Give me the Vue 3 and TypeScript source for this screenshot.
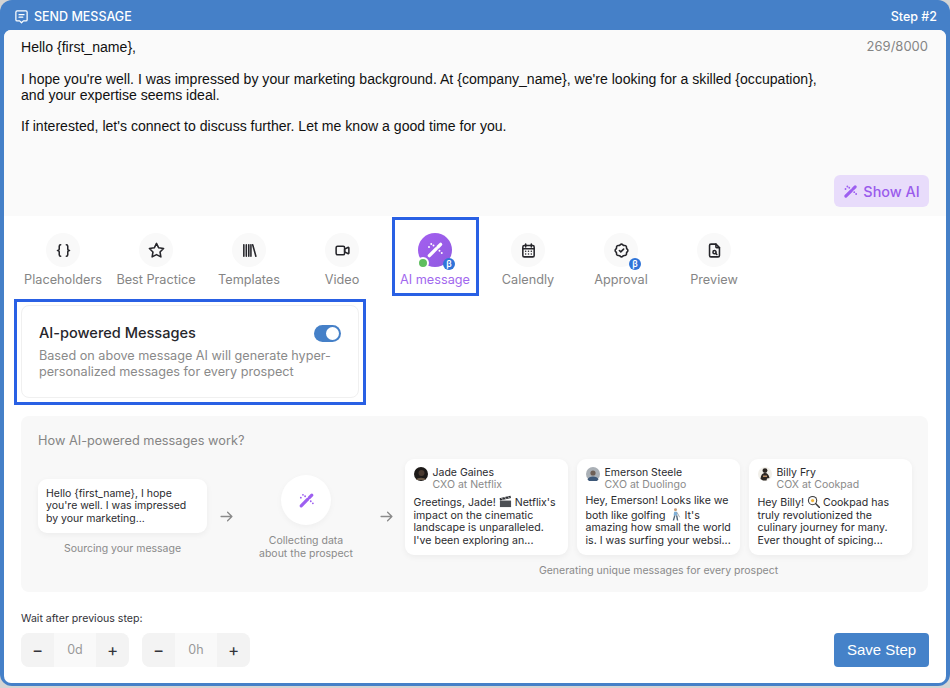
<script setup lang="ts">
interface Tab {
  label: string
  paths: string[]
  beta?: boolean
}

const wand = [
  'M4.5 19.5L13.5 10.5',
  'M16 8L19.5 4.5',
]

const tabs: Tab[] = [
  {
    label: 'Placeholders',
    paths: [
      'M8 4a2 2 0 0 0 -2 2v3.5a2.5 2.5 0 0 1 -2.5 2.5a2.5 2.5 0 0 1 2.5 2.5v3.5a2 2 0 0 0 2 2',
      'M16 4a2 2 0 0 1 2 2v3.5a2.5 2.5 0 0 0 2.5 2.5a2.5 2.5 0 0 0 -2.5 2.5v3.5a2 2 0 0 1 -2 2',
    ],
  },
  {
    label: 'Best Practice',
    paths: ['M12 17.75l-6.172 3.245l1.179 -6.873l-5 -4.867l6.9 -1l3.086 -6.253l3.086 6.253l6.9 1l-5 4.867l1.179 6.873z'],
  },
  {
    label: 'Templates',
    paths: ['M4 4v16', 'M7.5 4v16', 'M11 4v16', 'M14 4v16', 'M16.5 4l4.5 16'],
  },
  {
    label: 'Video',
    paths: [
      'M15 10l4.553 -2.276a1 1 0 0 1 1.447 .894v6.764a1 1 0 0 1 -1.447 .894l-4.553 -2.276v-4z',
      'M3 8a2 2 0 0 1 2 -2h8a2 2 0 0 1 2 2v8a2 2 0 0 1 -2 2h-8a2 2 0 0 1 -2 -2z',
    ],
  },
  { label: 'AI message', paths: [], beta: true },
  {
    label: 'Calendly',
    paths: [
      'M4 7a2 2 0 0 1 2 -2h12a2 2 0 0 1 2 2v12a2 2 0 0 1 -2 2h-12a2 2 0 0 1 -2 -2z',
      'M8 3v4', 'M16 3v4', 'M4 9.5h16',
      'M8 13h.01', 'M12 13h.01', 'M16 13h.01', 'M8 17h.01', 'M12 17h.01', 'M16 17h.01',
    ],
  },
  {
    label: 'Approval',
    beta: true,
    paths: [
      'M5 7.2a2.2 2.2 0 0 1 2.2 -2.2h1a2.2 2.2 0 0 0 1.55 -.64l.7 -.7a2.2 2.2 0 0 1 3.12 0l.7 .7c.412 .41 .97 .64 1.55 .64h1a2.2 2.2 0 0 1 2.2 2.2v1c0 .58 .23 1.138 .64 1.55l.7 .7a2.2 2.2 0 0 1 0 3.12l-.7 .7a2.2 2.2 0 0 0 -.64 1.55v1a2.2 2.2 0 0 1 -2.2 2.2h-1a2.2 2.2 0 0 0 -1.55 .64l-.7 .7a2.2 2.2 0 0 1 -3.12 0l-.7 -.7a2.2 2.2 0 0 0 -1.55 -.64h-1a2.2 2.2 0 0 1 -2.2 -2.2v-1a2.2 2.2 0 0 0 -.64 -1.55l-.7 -.7a2.2 2.2 0 0 1 0 -3.12l.7 -.7a2.2 2.2 0 0 0 .64 -1.55v-1',
      'M9 12l2 2l4 -4',
    ],
  },
  {
    label: 'Preview',
    paths: [
      'M14 3v4a1 1 0 0 0 1 1h4',
      'M17 21h-10a2 2 0 0 1 -2 -2v-14a2 2 0 0 1 2 -2h7l5 5v11a2 2 0 0 1 -2 2z',
      'M12 16.5a2.2 2.2 0 1 0 0 -4.4a2.2 2.2 0 0 0 0 4.4z',
      'M13.7 16l1.6 1.6',
    ],
  },
]

const prospects = [
  { name: 'Jade Gaines', role: 'CXO at Netflix', kind: 'jade', before: 'Greetings, Jade! ', emoji: 'clapper', after: " Netflix's impact on the cinematic landscape is unparalleled. I've been exploring an..." },
  { name: 'Emerson Steele', role: 'CXO at Duolingo', kind: 'emerson', before: 'Hey, Emerson! Looks like we both like golfing ', emoji: 'golfer', after: " It's amazing how small the world is. I was surfing your websi..." },
  { name: 'Billy Fry', role: 'COX at Cookpad', kind: 'billy', before: 'Hey Billy! ', emoji: 'pan', after: ' Cookpad has truly revolutionized the culinary journey for many. Ever thought of spicing...' },
]

const steppers = ['0d', '0h']
</script>

<template>
  <div class="frame">
    <header class="top">
      <div class="top-left">
        <svg class="msg" viewBox="0 0 24 24" fill="none" stroke="#fff" stroke-width="2" stroke-linecap="round" stroke-linejoin="round">
          <path d="M5 3h14a2 2 0 0 1 2 2v12a2 2 0 0 1 -2 2h-4l-3 3l-3 -3h-4a2 2 0 0 1 -2 -2v-12a2 2 0 0 1 2 -2z" />
          <path d="M8 9h8" />
          <path d="M8 13h6" />
        </svg>
        <span>SEND MESSAGE</span>
      </div>
      <span class="step">Step #2</span>
    </header>

    <div class="panel">
      <section class="editor">
        <div class="counter">269/8000</div>
        <p>Hello {first_name},</p>
        <p>I hope you're well. I was impressed by your marketing background. At {company_name}, we're looking for a skilled {occupation},<br />and your expertise seems ideal.</p>
        <p>If interested, let's connect to discuss further. Let me know a good time for you.</p>
        <button class="show-ai">
          <svg viewBox="0 0 24 24" fill="none" stroke="#9d5ff0" stroke-linecap="round">
            <path v-for="d in wand" :key="d" :d="d" stroke-width="5" />
            <path d="M7 4h.01M4 8h.01M18 13h.01M21 16h.01M10 6h.01" stroke-width="3" />
          </svg>
          Show AI
        </button>
      </section>

      <nav class="tabs">
        <div v-for="tab in tabs" :key="tab.label" class="tab" :class="{ active: tab.label === 'AI message' }">
          <div class="tab-icon">
            <svg v-if="tab.label === 'AI message'" class="tab-svg wand" viewBox="0 0 24 24" fill="none" stroke="#fff" stroke-linecap="round">
              <path v-for="d in wand" :key="d" :d="d" stroke-width="4.5" />
              <path d="M7 4h.01M4 8h.01M18 13h.01M21 16h.01M10 6h.01" stroke-width="2.6" />
            </svg>
            <svg v-else class="tab-svg" viewBox="0 0 24 24" fill="none" stroke="#26262b" stroke-width="2.2" stroke-linecap="round" stroke-linejoin="round">
              <path v-for="d in tab.paths" :key="d" :d="d" />
            </svg>
            <span v-if="tab.label === 'AI message'" class="dot"></span>
            <span v-if="tab.beta" class="beta">β</span>
          </div>
          <span class="tab-label">{{ tab.label }}</span>
        </div>
        <div class="mark mark-tab"></div>
      </nav>

      <div class="ai-row">
        <div class="ai-card">
          <div class="ai-head">
            <h3>AI-powered Messages</h3>
            <span class="toggle"><i></i></span>
          </div>
          <p>Based on above message AI will generate hyper-personalized messages for every prospect</p>
        </div>
        <div class="mark mark-card"></div>
      </div>

      <section class="how">
        <h4>How AI-powered messages work?</h4>
        <div class="flow">
          <div class="source">
            <div class="bubble">Hello {first_name}, I hope you're well. I was impressed by your marketing...</div>
            <div class="caption">Sourcing your message</div>
          </div>
          <svg class="arrow" viewBox="0 0 24 24" fill="none" stroke="#8a8a8a" stroke-width="2.4" stroke-linecap="round" stroke-linejoin="round">
            <path d="M2 12h20M14 4l8 8l-8 8" />
          </svg>
          <div class="collect">
            <div class="collect-circle">
              <svg viewBox="0 0 24 24" fill="none" stroke="#9d5ff0" stroke-linecap="round">
                <path v-for="d in wand" :key="d" :d="d" stroke-width="4.5" />
                <path d="M7 4h.01M4 8h.01M18 13h.01M21 16h.01M10 6h.01" stroke-width="2.6" />
              </svg>
            </div>
            <div class="caption">Collecting data<br />about the prospect</div>
          </div>
          <svg class="arrow" viewBox="0 0 24 24" fill="none" stroke="#8a8a8a" stroke-width="2.4" stroke-linecap="round" stroke-linejoin="round">
            <path d="M2 12h20M14 4l8 8l-8 8" />
          </svg>
          <div class="generated">
            <div class="cards">
              <article v-for="p in prospects" :key="p.name" class="card">
                <div class="person">
                  <svg class="avatar" viewBox="0 0 14 14">
                    <template v-if="p.kind === 'jade'">
                      <circle cx="7" cy="7" r="7" fill="#1d1a18" />
                      <circle cx="7.500" cy="6" r="3" fill="#4a3a30" />
                      <path d="M2 13c1-3 9-3 10 0z" fill="#6b5a48" />
                    </template>
                    <template v-else-if="p.kind === 'emerson'">
                      <circle cx="7" cy="7" r="7" fill="#aab0b6" />
                      <circle cx="7" cy="6" r="2.600" fill="#6e5f55" />
                      <path d="M1.500 12.500c1-4 10-4 11 0a7 7 0 0 1 -11 0z" fill="#3d5878" />
                    </template>
                    <template v-else>
                      <circle cx="7" cy="7" r="7" fill="#f1efe9" />
                      <circle cx="7" cy="3.600" r="2.400" fill="#2b2622" />
                      <path d="M2.500 12c.5-4 2-6 4.500-6s4 2 4.500 5l-2.500 .5l-.5 2h-3.500z" fill="#2b2622" />
                      <path d="M5 8.500h4v1.500h-4z" fill="#b98f68" />
                    </template>
                  </svg>
                  <div>
                    <div class="name">{{ p.name }}</div>
                    <div class="role">{{ p.role }}</div>
                  </div>
                </div>
                <p>{{ p.before }}<svg v-if="p.emoji === 'clapper'" class="emoji" viewBox="0 0 14 14">
                    <path d="M1 6h12v7h-12z" fill="#4c4f54" />
                    <path d="M.6 3.400l11.800-2.700l.5 2.600l-11.800 2.700z" fill="#2e3034" />
                    <path d="M2.500 3l1.700 2M6 2.200l1.700 2M9.500 1.400l1.700 2" stroke="#d8d8d8" stroke-width="1" />
                  </svg><svg v-else-if="p.emoji === 'golfer'" class="emoji" viewBox="0 0 14 14">
                    <circle cx="7" cy="2" r="1.600" fill="#c99a72" />
                    <path d="M5.500 4h3l.5 4h-4z" fill="#7fb0d8" />
                    <path d="M5.500 8h1.500l-1.500 5.500h-1.500zM7.500 8h1.500l1 5.500h-1.500z" fill="#4f6478" />
                    <path d="M8.500 4.500l3 5.500" stroke="#8a8f94" stroke-width=".8" />
                  </svg><svg v-else class="emoji" viewBox="0 0 14 14">
                    <circle cx="6" cy="6" r="5" fill="#3a3a3c" />
                    <circle cx="6" cy="6" r="3.900" fill="#fafafa" />
                    <circle cx="6" cy="6" r="1.700" fill="#f3b63a" />
                    <path d="M9.500 9.500l4 4" stroke="#3a3a3c" stroke-width="1.600" stroke-linecap="round" />
                  </svg>{{ p.after }}</p>
              </article>
            </div>
            <div class="caption">Generating unique messages for every prospect</div>
          </div>
        </div>
      </section>

      <footer class="foot">
        <div>
          <div class="wait">Wait after previous step:</div>
          <div class="steppers">
            <div v-for="s in steppers" :key="s" class="stepper">
              <span class="st-btn">−</span>
              <span class="st-val">{{ s }}</span>
              <span class="st-btn">+</span>
            </div>
          </div>
        </div>
        <button class="save">Save Step</button>
      </footer>
    </div>
  </div>
</template>

<style>
html,
body {
  margin: 0;
  background: #d4d4d4;
}
</style>

<style scoped>
* {
  box-sizing: border-box;
}

.frame {
  width: 950px;
  height: 686px;
  background: #4580c8;
  border-radius: 12px;
  padding: 0 4px 3px;
  display: flex;
  flex-direction: column;
  font-family: Inter, "Liberation Sans", sans-serif;
  overflow: hidden;
}

.top {
  height: 30px;
  flex: none;
  display: flex;
  align-items: center;
  justify-content: space-between;
  padding: 2px 9px 0 10px;
  color: #fff;
  font-size: 12.5px;
  font-weight: 500;
}

.top-left {
  display: flex;
  align-items: center;
  gap: 5px;
}

.msg {
  width: 15px;
  height: 15px;
}

.panel {
  flex: 1;
  background: #fff;
  border-radius: 7px;
  overflow: hidden;
  display: flex;
  flex-direction: column;
}

.editor {
  position: relative;
  height: 186px;
  flex: none;
  background: #fafafa;
  padding: 9px 17px 0;
  font-family: "Liberation Sans", Arial, sans-serif;
  font-size: 14.09px;
  line-height: 16px;
  color: #111;
}

.editor p {
  margin: 0 0 15.5px;
}

.counter {
  position: absolute;
  top: 8px;
  right: 18px;
  font-family: Inter, sans-serif;
  font-size: 13px;
  color: #858585;
}

.show-ai {
  position: absolute;
  right: 17px;
  bottom: 9px;
  width: 95px;
  height: 32px;
  border: 0;
  border-radius: 6px;
  background: #e8dcfb;
  color: #9a5bec;
  font-family: Inter, sans-serif;
  font-size: 14.4px;
  font-weight: 500;
  display: flex;
  align-items: center;
  justify-content: center;
  gap: 5px;
  padding: 0;
}

.show-ai svg {
  width: 15px;
  height: 15px;
}

.tabs {
  position: relative;
  display: flex;
  flex: none;
  height: 83px;
  padding: 17px 0 0 12.5px;
}

.tab {
  width: 93px;
  display: flex;
  flex-direction: column;
  align-items: center;
}

.tab-icon {
  position: relative;
  width: 34px;
  height: 34px;
  border-radius: 50%;
  background: #f9f9f9;
  display: flex;
  align-items: center;
  justify-content: center;
}

.tab-svg {
  width: 17px;
  height: 17px;
}

.active .tab-icon {
  background: linear-gradient(135deg, #a45ff0, #8f5be0);
}

.tab-svg.wand {
  width: 18px;
  height: 18px;
}

.dot {
  position: absolute;
  left: -1px;
  bottom: -2px;
  width: 12px;
  height: 12px;
  border-radius: 50%;
  background: #5fbe5f;
  border: 2px solid #fff;
}

.beta {
  position: absolute;
  right: -3px;
  bottom: -3px;
  width: 12px;
  height: 12px;
  border-radius: 50%;
  background: #2f74d8;
  color: #fff;
  font-size: 9px;
  font-weight: 600;
  line-height: 12px;
  text-align: center;
}

.tab-label {
  margin-top: 5px;
  font-size: 12.7px;
  line-height: 16px;
  color: #858585;
}

.active .tab-label {
  color: #a268ee;
}

.mark {
  position: absolute;
  border: 3px solid #2960e4;
  pointer-events: none;
}

.mark-tab {
  left: 388px;
  top: 1px;
  width: 87px;
  height: 79px;
}

.ai-row {
  position: relative;
  flex: none;
  padding: 6px 0 0 17px;
  height: 117px;
}

.mark-card {
  left: 10px;
  top: 0;
  width: 352px;
  height: 106px;
}

.ai-card {
  width: 338px;
  height: 93px;
  border: 1px solid #f0f0f0;
  border-radius: 8px;
  padding: 18px 17px 0 17px;
}

.ai-head {
  display: flex;
  justify-content: space-between;
  align-items: center;
  height: 18px;
}

.ai-head h3 {
  margin: 0;
  font-size: 14.55px;
  font-weight: 500;
  color: #26262b;
}

.toggle {
  width: 27px;
  height: 17px;
  border-radius: 9px;
  background: #4580c8;
  display: flex;
  justify-content: flex-end;
  align-items: center;
  padding-right: 2px;
}

.toggle i {
  width: 13px;
  height: 13px;
  border-radius: 50%;
  background: #fff;
}

.ai-card p {
  margin: 6px 0 0;
  font-size: 12.65px;
  line-height: 16px;
  color: #8a8a8a;
}

.how {
  flex: none;
  margin: 0 18px 0 17px;
  height: 176px;
  background: #f8f8f8;
  border-radius: 8px;
  padding: 17px 0 0 17px;
}

.how h4 {
  margin: 0;
  font-size: 12.75px;
  line-height: 15px;
  font-weight: 400;
  color: #858585;
}

.flow {
  display: flex;
  align-items: flex-start;
  margin-top: 11px;
}

.source {
  width: 169px;
  flex: none;
  margin-top: 20px;
}

.bubble {
  height: 54px;
  background: #fff;
  border-radius: 9px;
  padding: 8.5px 8px 0;
  font-size: 10.5px;
  line-height: 12.6px;
  color: #2a2a2e;
  box-shadow: 0 2px 6px rgba(0, 0, 0, 0.05);
}

.caption {
  font-size: 10.5px;
  line-height: 12.5px;
  color: #8a8a8a;
  text-align: center;
}

.source .caption {
  margin-top: 9.5px;
}

.arrow {
  width: 13px;
  height: 13px;
  flex: none;
  margin: 51px 0 0 13px;
}

.collect {
  width: 110px;
  flex: none;
  margin: 16px 6px 0 18px;
  display: flex;
  flex-direction: column;
  align-items: center;
}

.collect-circle {
  width: 50px;
  height: 50px;
  border-radius: 50%;
  background: #fff;
  display: flex;
  align-items: center;
  justify-content: center;
  box-shadow: 0 2px 6px rgba(0, 0, 0, 0.04);
}

.collect-circle svg {
  width: 17px;
  height: 17px;
}

.collect .caption {
  margin-top: 10px;
}

.generated {
  flex: none;
  margin-left: 12px;
}

.cards {
  display: flex;
  gap: 9px;
}

.card {
  width: 163px;
  height: 96px;
  background: #fff;
  border-radius: 9px;
  padding: 7.5px 8.5px 0;
  box-shadow: 0 2px 6px rgba(0, 0, 0, 0.05);
}

.person {
  display: flex;
  gap: 5px;
  font-size: 10.5px;
  line-height: 12.5px;
}

.avatar {
  width: 14px;
  height: 14px;
  flex: none;
}

.name {
  color: #2a2a2e;
}

.role {
  color: #8a8a8a;
}

.card p {
  margin: 3.5px 0 0;
  font-size: 10.6px;
  line-height: 12.6px;
  color: #2a2a2e;
}

.emoji {
  width: 13px;
  height: 13px;
  vertical-align: -2px;
}

.generated .caption {
  margin-top: 10px;
}

.foot {
  flex: 1;
  display: flex;
  justify-content: space-between;
  align-items: flex-end;
  padding: 0 17px 16px;
}

.wait {
  font-size: 10.6px;
  line-height: 13px;
  color: #33333a;
  margin-bottom: 8px;
}

.steppers {
  display: flex;
  gap: 13px;
}

.stepper {
  display: flex;
  width: 108px;
  height: 34px;
  border-radius: 8px;
  overflow: hidden;
  background: #f9f9f9;
}

.st-btn {
  width: 33px;
  background: #f3f3f3;
  color: #33333a;
  font-size: 17px;
  display: flex;
  align-items: center;
  justify-content: center;
}

.st-val {
  flex: 1;
  text-align: center;
  font-size: 12.5px;
  line-height: 34px;
  color: #999;
}

.save {
  width: 95px;
  height: 34px;
  border: 0;
  border-radius: 4px;
  background: #4582c9;
  color: #fff;
  font-family: "Liberation Sans", Arial, sans-serif;
  font-size: 15px;
  padding: 0 0 2px;
}
</style>
